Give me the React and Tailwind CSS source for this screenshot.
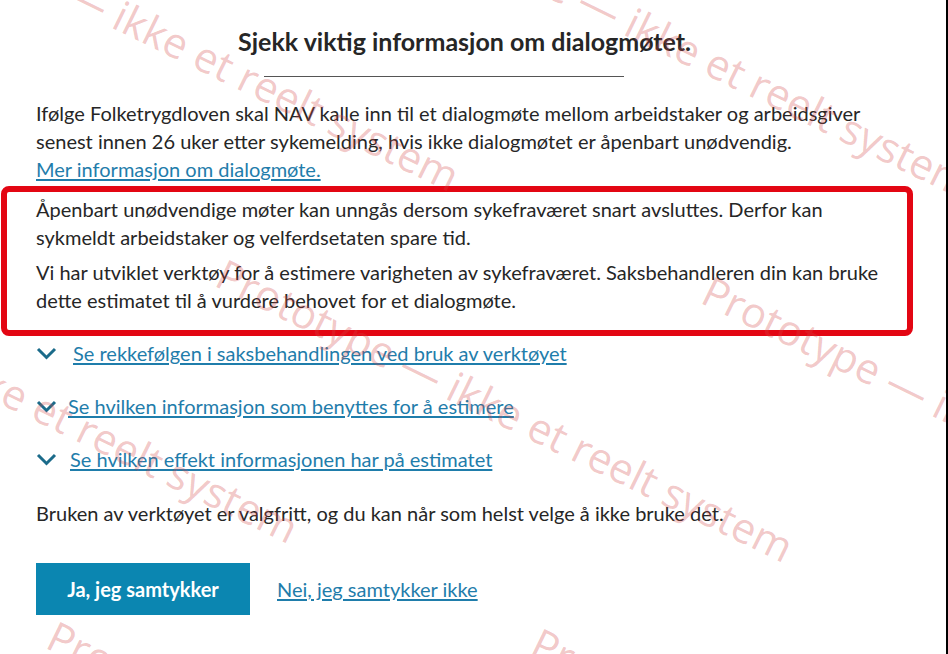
import React from 'react';

// top-left corners of the "Prototype — ikke et reelt system" watermarks
const marks = [
  { left: -105, top: -119 },
  { left: 407, top: -112 },
  { left: -266, top: 233 },
  { left: 229, top: 252 },
  { left: 715, top: 269 },
  { left: 60, top: 614 },
  { left: 544, top: 621 },
];

const Chevron = () => (
  <svg width="21" height="13" viewBox="0 0 21 13" className="shrink-0">
    <polyline points="2,2 10.5,10.5 19,2" fill="none" stroke="#1b6b8a" strokeWidth="3" />
  </svg>
);

const Expander = ({ label, gap }) => (
  <div className={`flex items-center h-[28px] ${gap}`}>
    <Chevron />
    <a href="#" className="text-[#1f7dab] underline underline-offset-2">{label}</a>
  </div>
);

export default function App() {
  return (
    <div
      className="relative w-[948px] h-[654px] overflow-hidden bg-white border-r-2 border-black text-[#262626]"
      style={{ fontFamily: 'Lato, "Open Sans", sans-serif' }}
    >
      <div className="w-[857px] ml-[36px] pt-[25px] text-[20px] leading-[28px]">
        <h1 className="text-center text-[25px] leading-[32px] font-bold">
          Sjekk viktig informasjon om dialogmøtet.
        </h1>
        <div className="mt-[19px] ml-[228px] w-[360px] h-px bg-[#555]" />

        <p className="mt-[22px]">
          Ifølge Folketrygdloven skal NAV kalle inn til et dialogmøte mellom arbeidstaker og arbeidsgiver
          senest innen 26 uker etter sykemelding, hvis ikke dialogmøtet er åpenbart unødvendig.
          <br />
          <a href="#" className="text-[#1f7dab] underline underline-offset-2">Mer informasjon om dialogmøte.</a>
        </p>

        <div className="mt-[3px] -ml-[35px] -mr-[20px] border-[6px] border-[#e30613] rounded-[8px] pl-[29px] pr-4 pt-[3px] pb-[16px]">
          <p>
            Åpenbart unødvendige møter kan unngås dersom sykefraværet snart avsluttes. Derfor kan
            sykmeldt arbeidstaker og velferdsetaten spare tid.
          </p>
          <p className="mt-[7px]">
            Vi har utviklet verktøy for å estimere varigheten av sykefraværet. Saksbehandleren din kan bruke
            dette estimatet til å vurdere behovet for et dialogmøte.
          </p>
        </div>

        <div className="mt-[3px] flex flex-col gap-[25px]">
          <Expander gap="gap-[16px]" label="Se rekkefølgen i saksbehandlingen ved bruk av verktøyet" />
          <Expander gap="gap-[11px]" label="Se hvilken informasjon som benyttes for å estimere" />
          <Expander gap="gap-[13px]" label="Se hvilken effekt informasjonen har på estimatet" />
        </div>

        <p className="mt-[26px]">
          Bruken av verktøyet er valgfritt, og du kan når som helst velge å ikke bruke det.
        </p>

        <div className="mt-[36px] flex items-center gap-[27px]">
          <button className="w-[214px] h-[52px] bg-[#0b86b1] text-white font-bold text-[20px]">
            Ja, jeg samtykker
          </button>
          <a href="#" className="text-[#1f7dab] underline underline-offset-2">Nei, jeg samtykker ikke</a>
        </div>
      </div>

      <div className="absolute inset-0 pointer-events-none">
        {marks.map((m, i) => (
          <span
            key={i}
            className="absolute whitespace-nowrap origin-top-left rotate-[26deg] text-[42px] leading-none text-[rgba(210,70,70,0.3)]"
            style={{ left: m.left, top: m.top, fontFamily: '"Open Sans", sans-serif' }}
          >
            Prototype — ikke et reelt system
          </span>
        ))}
      </div>
    </div>
  );
}
